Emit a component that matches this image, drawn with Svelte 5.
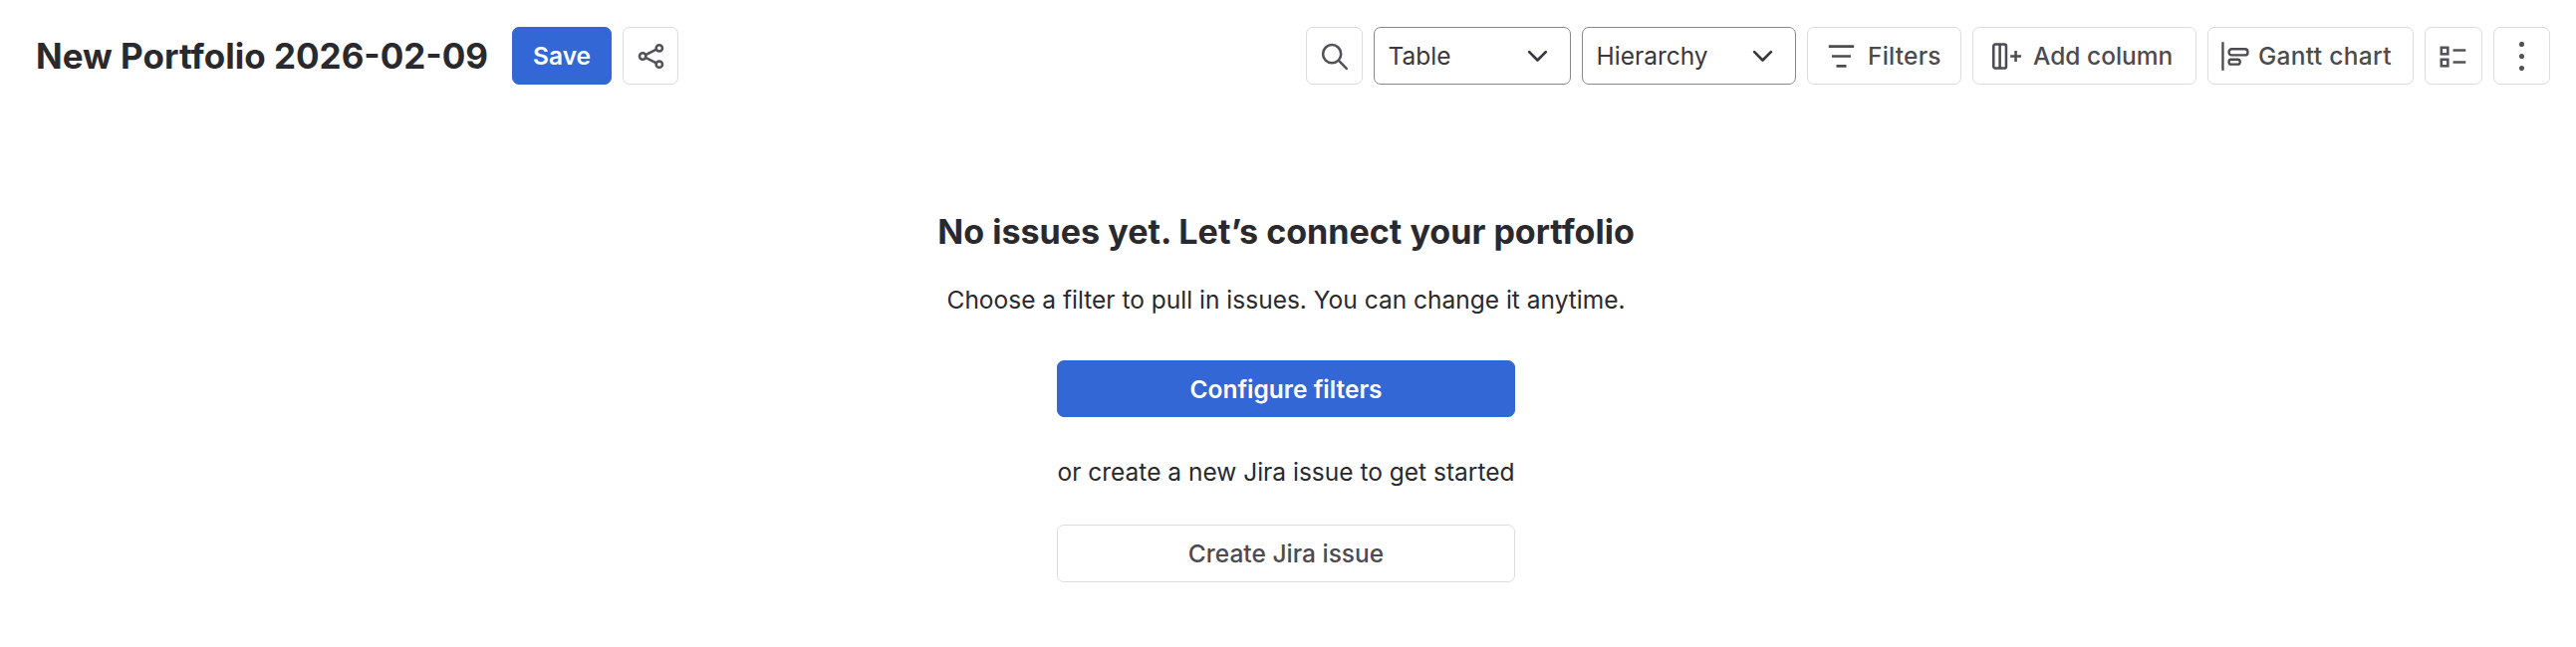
<script lang="ts">
	const views = ['Table', 'Hierarchy'];
</script>

<div class="page">
	<header class="toolbar">
		<div class="left">
			<h1>New Portfolio 2026-02-09</h1>
			<button class="btn primary save">Save</button>
			<button class="btn icon share" aria-label="Share">
				<svg viewBox="0 0 16 16" width="29" height="29" fill="none" stroke="currentColor" stroke-width="1.4">
					<circle cx="12.6" cy="3.5" r="1.75" />
					<circle cx="3.4" cy="8" r="1.75" />
					<circle cx="12.6" cy="12.5" r="1.75" />
					<path d="M5 7.2l6-3M5 8.8l6 3" />
				</svg>
			</button>
		</div>
		<div class="right">
			<button class="btn icon search" aria-label="Search">
				<svg viewBox="0 0 16 16" width="29" height="29" fill="none" stroke="currentColor" stroke-width="1.4" stroke-linecap="round">
					<circle cx="6.7" cy="6.7" r="5" />
					<path d="M10.6 10.6l4.2 4.2" />
				</svg>
			</button>
			{#each views as view, i}
				<button class="select" class:wide={i === 1}>
					<span>{view}</span>
					<svg viewBox="0 0 16 16" width="29" height="29" fill="none" stroke="currentColor" stroke-width="1.5" stroke-linecap="round" stroke-linejoin="round">
						<path d="M3.4 5.6L8 10.2l4.6-4.6" />
					</svg>
				</button>
			{/each}
			<button class="btn filters">
				<svg viewBox="0 0 16 16" width="29" height="29" fill="none" stroke="currentColor" stroke-width="1.5">
					<path d="M1 2.6h14M2.75 8h10.5M5.25 13.4h5.5" />
				</svg>
				Filters
			</button>
			<button class="btn addcol">
				<svg viewBox="0 0 16 16" width="29" height="29" fill="none" stroke="currentColor" stroke-width="1.4" stroke-linejoin="round">
					<rect x="0.7" y="1.4" width="7" height="13.2" rx="1" />
					<path d="M4.2 1.4v13.2M10 8h6M13 5v6" />
				</svg>
				Add column
			</button>
			<button class="btn gantt">
				<svg viewBox="0 0 16 16" width="29" height="29" fill="none" stroke="currentColor" stroke-width="1.3">
					<path d="M0.8 0.1v15.8" />
					<rect x="4.2" y="4" width="10.4" height="3.4" rx="1.5" />
					<rect x="4.2" y="9.8" width="6.1" height="2.7" rx="1.2" />
				</svg>
				Gantt chart
			</button>
			<button class="btn icon list" aria-label="Display options">
				<svg viewBox="0 0 16 16" width="29" height="29" fill="none" stroke="currentColor" stroke-width="1.4">
					<rect x="1" y="3.2" width="3.6" height="3.6" />
					<rect x="1" y="9.8" width="3.6" height="3.6" />
					<path d="M7.5 4.7h7M7.5 11.3h7" />
				</svg>
			</button>
			<button class="btn icon more" aria-label="More actions">
				<svg viewBox="0 0 16 16" width="29" height="29" fill="currentColor">
					<circle cx="8" cy="1.33" r="1.4" />
					<circle cx="8" cy="8" r="1.4" />
					<circle cx="8" cy="14.67" r="1.4" />
				</svg>
			</button>
		</div>
	</header>

	<main class="empty">
		<h2>No issues yet. Let’s connect your portfolio</h2>
		<p class="sub">Choose a filter to pull in issues. You can change it anytime.</p>
		<button class="btn primary wide-btn">Configure filters</button>
		<p class="or">or create a new Jira issue to get started</p>
		<button class="btn wide-btn">Create Jira issue</button>
	</main>
</div>

<style>
	:global(body) {
		margin: 0;
		background: #fff;
	}
	.page {
		font-family: Inter, 'Liberation Sans', sans-serif;
		color: #2a2a2e;
		font-size: 24.5px;
	}
	.toolbar {
		display: flex;
		justify-content: space-between;
		align-items: center;
		padding: 27px 26px 0 36px;
	}
	.left,
	.right {
		display: flex;
		align-items: center;
		gap: 11px;
	}
	h1 {
		margin: 0 13px 0 0;
		font-size: 35px;
		font-weight: 700;
		line-height: 58px;
	}
	.btn,
	.select {
		box-sizing: border-box;
		height: 58px;
		font: inherit;
		background: #fff;
		border-radius: 7px;
		display: inline-flex;
		align-items: center;
		justify-content: center;
		padding: 0;
		cursor: pointer;
	}
	.btn {
		border: 1.5px solid #dcdcde;
		color: #4c4b51;
		font-weight: 500;
	}
	.btn.primary {
		background: #3367d6;
		border-color: #3367d6;
		color: #fff;
		font-weight: 600;
	}
	.save {
		width: 100px;
	}
	.icon {
		width: 57px;
		color: #535158;
	}
	.share {
		width: 56px;
	}
	.list {
		width: 58px;
	}
	.select {
		width: 198px;
		justify-content: space-between;
		padding: 0 18px 0 14px;
		border: 1.5px solid #89888d;
		color: #3a383f;
	}
	.select.wide {
		width: 215.5px;
	}
	.filters {
		width: 155px;
		justify-content: flex-start;
		padding-left: 19px;
		gap: 12px;
		letter-spacing: 0.2px;
	}
	.addcol {
		width: 224.5px;
		justify-content: flex-start;
		padding-left: 19px;
		gap: 12px;
	}
	.gantt {
		width: 207.5px;
		justify-content: flex-start;
		padding-left: 13.5px;
		gap: 8px;
		letter-spacing: 0.3px;
	}
	.empty {
		display: flex;
		flex-direction: column;
		align-items: center;
		padding: 126px 4px 0 0;
	}
	h2 {
		margin: 0;
		font-size: 34.1px;
		line-height: 44px;
		font-weight: 700;
	}
	.sub {
		margin: 28px 0 0;
		line-height: 36px;
	}
	.wide-btn {
		width: 460px;
		height: 57px;
		margin-top: 43px;
	}
	.or {
		margin: 37px 0 0;
		line-height: 36px;
	}
	.or + .wide-btn {
		margin-top: 35px;
		height: 58px;
	}
</style>
